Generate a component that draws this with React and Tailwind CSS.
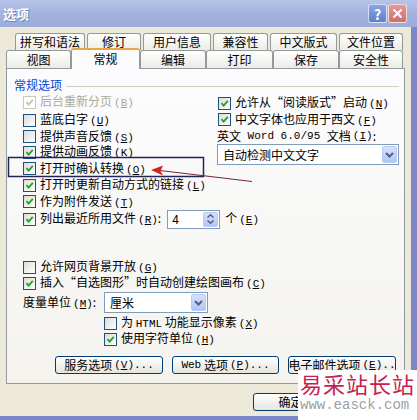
import React from 'react';

const Key = ({ k }) => (
  <span className="ml-[2px] font-['Liberation_Mono',monospace] text-[11px]">
    (<span className="underline">{k}</span>)
  </span>
);

const Mono = ({ children }) => (
  <span className="font-['Liberation_Mono',monospace] text-[11px]">{children}</span>
);

const Box = ({ on, off }) => (
  <span
    className={
      off
        ? 'flex h-[13px] w-[13px] shrink-0 items-center justify-center border border-[#cac8bb] bg-white'
        : 'flex h-[13px] w-[13px] shrink-0 items-center justify-center border border-[#1c5180] bg-gradient-to-br from-[#dcdcd7] to-white'
    }
  >
    {on && (
      <svg width="9" height="9" viewBox="0 0 9 9">
        <path d="M1.5 4.2 L3.6 6.6 L7.8 1.8" fill="none" stroke={off ? '#c4c2b4' : '#21a121'} strokeWidth="1.8" />
      </svg>
    )}
  </span>
);

const Row = ({ on, off, h = 'h-[16px]', children }) => (
  <div className={`flex items-center gap-[4px] whitespace-nowrap ${h}`}>
    <Box on={on} off={off} />
    <span className={off ? 'text-[#aca899]' : 'text-black'}>{children}</span>
  </div>
);

const Chevron = () => (
  <svg width="9" height="6" viewBox="0 0 9 6">
    <path d="M1 1 L4.5 4.5 L8 1" fill="none" stroke="#4d6185" strokeWidth="2" />
  </svg>
);

const Combo = ({ text, w }) => (
  <div className={`flex h-[21px] items-center border border-[#7f9db9] bg-white p-px ${w}`}>
    <span className="flex-1 pl-[4px]">{text}</span>
    <span className="flex h-[17px] w-[15px] items-center justify-center rounded-[2px] border border-[#b8c9f4] bg-gradient-to-b from-[#d6e1fb] to-[#b2c5f3]">
      <Chevron />
    </span>
  </div>
);

const Btn = ({ w, children }) => (
  <div className={`flex h-[18px] shrink-0 items-center justify-center overflow-hidden whitespace-nowrap rounded-[3px] border border-[#003c74] bg-gradient-to-b from-white to-[#e6e5de] ${w}`}>
    {children}
  </div>
);

const Tab = ({ w, children }) => (
  <div className={`flex h-full shrink-0 items-center justify-center rounded-t-[3px] border border-b-0 border-[#919b9c] bg-gradient-to-b from-white to-[#ecebe6] ${w}`}>
    {children}
  </div>
);

export default function App() {
  return (
    <div className="relative flex h-[420px] w-[417px] flex-col overflow-hidden bg-[#ece9d8] font-['Noto_Sans_CJK_SC','Noto_Sans',sans-serif] text-[12px] leading-none text-black">
      {/* title bar */}
      <div className="flex h-[27px] shrink-0 items-center justify-between bg-gradient-to-b from-[#b7c4ea] via-[#a3b3df] to-[#9cacdb] pl-[3px] pr-[10px]">
        <span className="text-[13px] font-bold text-white [text-shadow:1px_1px_0_#7080b0]">选项</span>
        <div className="flex gap-[1px]">
          <div className="flex h-[19px] w-[19px] items-center justify-center rounded-[3px] border border-white/70 bg-gradient-to-b from-[#87a5e6] to-[#5f80cf] text-[14px] font-bold text-white">?</div>
          <div className="flex h-[19px] w-[19px] items-center justify-center rounded-[3px] border border-white/70 bg-gradient-to-b from-[#e3999a] to-[#c9716f]">
            <svg width="11" height="11" viewBox="0 0 11 11">
              <path d="M1.5 1.5 L9.5 9.5 M9.5 1.5 L1.5 9.5" stroke="white" strokeWidth="2" />
            </svg>
          </div>
        </div>
      </div>

      {/* body */}
      <div className="flex flex-1 flex-col border-b-[4px] border-r-[6px] border-[#7c87c9] pt-[6px]">
        {/* tabs row 1 */}
        <div className="flex h-[17px] gap-[2px] pl-[15px]">
          <Tab w="w-[70px]">拼写和语法</Tab>
          <Tab w="w-[54px]">修订</Tab>
          <Tab w="w-[68px]">用户信息</Tab>
          <Tab w="w-[55px]">兼容性</Tab>
          <Tab w="w-[67px]">中文版式</Tab>
          <Tab w="w-[64px]">文件位置</Tab>
        </div>
        {/* tabs row 2 */}
        <div className="flex h-[18px] pl-[6px]">
          <Tab w="w-[65px]">视图</Tab>
          <div className="relative z-10 -mt-[2px] flex h-[21px] w-[69px] shrink-0 items-center justify-center rounded-t-[3px] border border-b-0 border-t-2 border-[#919b9c] border-t-[#e9a647] bg-[#fcfcfe] pb-[1px]">
            常规
          </div>
          <Tab w="w-[66px]">编辑</Tab>
          <Tab w="w-[67px]">打印</Tab>
          <Tab w="w-[66px]">保存</Tab>
          <Tab w="w-[64px]">安全性</Tab>
        </div>

        {/* panel */}
        <div className="ml-[6px] flex h-[316px] w-[399px] flex-col border border-[#919b9c] bg-gradient-to-b from-[#fcfcfe] to-[#f4f3ee]">
          <div className="mt-[10px] flex h-[12px] items-center pl-[7px] pr-[5px]">
            <span className="text-[#0046d5]">常规选项</span>
            <span className="ml-[4px] mt-[3px] h-px flex-1 bg-[#d0d0bf]" />
          </div>

          <div className="flex">
            <div className="mt-[2px] flex w-[210px] flex-col pl-[16px]">
              <Row on off h="h-[18px]">后台重新分页<Key k="B" /></Row>
              <Row h="h-[18px]">蓝底白字<Key k="U" /></Row>
              <Row h="h-[15px]">提供声音反馈<Key k="S" /></Row>
              <Row on h="h-[16px]">提供动画反馈<Key k="K" /></Row>
              <Row on h="h-[17px]">打开时确认转换<Key k="O" /></Row>
              <Row on h="h-[16px]">打开时更新自动方式的链接<Key k="L" /></Row>
              <Row on h="h-[17px]">作为附件发送<Key k="T" /></Row>
            </div>
            <div className="flex flex-1 flex-col pr-[5px] pt-[4px]">
              <div className="pl-[1px]">
                <Row on h="h-[16px]">允许从“阅读版式”启动<Key k="N" /></Row>
                <Row on h="h-[17px]">中文字体也应用于西文<Key k="F" /></Row>
              </div>
              <div className="flex h-[16px] items-center whitespace-nowrap">
                英文 <Mono>&nbsp;Word 6.0/95&nbsp;</Mono> 文档<Key k="I" />:
              </div>
              <Combo text="自动检测中文文字" w="w-full" />
            </div>
          </div>

          <div className="flex h-[18px] items-center whitespace-nowrap pl-[16px]">
            <Row on>列出最近所用文件<Key k="R" />:</Row>
            <div className="ml-[6px] flex h-[19px] w-[53px] items-center border border-[#7f9db9] bg-white p-px">
              <span className="flex-1 pl-[3px]">4</span>
              <span className="flex h-[15px] w-[15px] flex-col items-center justify-center gap-[2px] rounded-[2px] border border-[#b8c9f4] bg-gradient-to-b from-[#d6e1fb] to-[#b2c5f3]">
                <svg width="7" height="4" viewBox="0 0 7 4"><path d="M0.5 3.5 L3.5 0.8 L6.5 3.5" fill="none" stroke="#4d6185" strokeWidth="1.5" /></svg>
                <svg width="7" height="4" viewBox="0 0 7 4"><path d="M0.5 0.5 L3.5 3.2 L6.5 0.5" fill="none" stroke="#4d6185" strokeWidth="1.5" /></svg>
              </span>
            </div>
            <span className="ml-[5px]">个<Key k="E" /></span>
          </div>

          <div className="mt-[31px] flex flex-col pl-[16px]">
            <Row>允许网页背景开放<Key k="G" /></Row>
            <Row on>插入“自选图形”时自动创建绘图画布<Key k="C" /></Row>
            <div className="mt-[1px] flex h-[21px] items-center whitespace-nowrap">
              <span className="w-[81px]">度量单位<Key k="M" />:</span>
              <Combo text="厘米" w="w-[104px]" />
            </div>
            <div className="ml-[81px] mt-[2px] flex flex-col">
              <Row>为 <Mono>HTML</Mono> 功能显示像素<Key k="X" /></Row>
              <Row on>使用字符单位<Key k="H" /></Row>
            </div>
            <div className="ml-[32px] mt-[9px] flex gap-[9px]">
              <Btn w="w-[108px]">服务选项<Key k="V" /><Mono>...</Mono></Btn>
              <Btn w="w-[107px]"><Mono>Web</Mono>&nbsp;选项<Key k="P" /><Mono>...</Mono></Btn>
              <Btn w="w-[108px]">电子邮件选项<Key k="E" /><Mono>..</Mono></Btn>
            </div>
          </div>
        </div>

        <div className="ml-[253px] mt-[9px] flex gap-[6px]">
          <Btn w="w-[75px]">确定</Btn>
          <Btn w="w-[75px]">取消</Btn>
        </div>
      </div>

      {/* annotation: frame and arrow */}
      <svg className="pointer-events-none absolute left-0 top-0" width="417" height="420" viewBox="0 0 417 420">
        <rect x="8.5" y="157.5" width="195" height="19" fill="none" stroke="#23235a" strokeWidth="1.5" />
        <line x1="160" y1="170.5" x2="252" y2="181.5" stroke="#7a2438" strokeWidth="1" />
        <polygon points="151,170 163,165.5 160.5,171 163,175.5" fill="#d42020" />
      </svg>

      {/* watermark */}
      <div className="absolute left-[298px] top-[370px] flex h-[50px] w-[119px] flex-col bg-white pl-[2px]">
        <span className="mt-[2px] text-[22px] leading-[22px] tracking-[1px] text-[#c8214f]">易采站长站</span>
        <span className="mt-[4px] font-['Liberation_Mono',monospace] text-[14px] leading-[14px] text-[#a0a0a0]">www.easck.com</span>
      </div>
    </div>
  );
}
